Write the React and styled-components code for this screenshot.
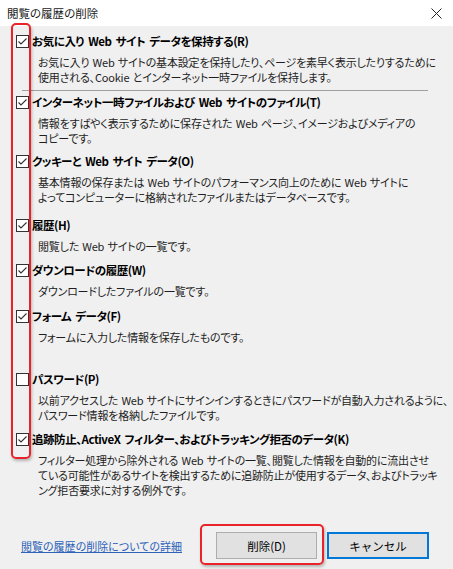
import React from "react";
import styled, { createGlobalStyle } from "styled-components";

const Global = createGlobalStyle`
  html, body { margin: 0; padding: 0; background: #f0f0f0; }
  body {
    font-family: "Noto Sans CJK JP", "Noto Sans", sans-serif;
    font-feature-settings: "palt";
    -webkit-font-smoothing: antialiased;
  }
`;

const Dialog = styled.div`
  width: 453px;
  height: 569px;
  position: relative;
  display: flex;
  flex-direction: column;
  background: #f0f0f0;
  overflow: hidden;
`;

const TitleBar = styled.div`
  height: 26px;
  flex: none;
  background: #ffffff;
  display: flex;
  align-items: center;
  justify-content: space-between;
  padding: 0 11px 0 7px;
  font-size: 11.5px;
  color: #1a1a1a;
`;

const Body = styled.div`
  display: flex;
  flex-direction: column;
  padding-left: 16px;
`;

const Item = styled.div`
  margin-top: ${(p) => p.$mt}px;
  display: flex;
  flex-direction: column;
`;

const Row = styled.label`
  display: flex;
  align-items: center;
  gap: 3px;
  height: 16px;
  font-size: 11.5px;
  letter-spacing: -0.45px;
  word-spacing: 2px;
  line-height: 16px;
  font-weight: 700;
  color: #000;
  white-space: pre;
`;

const Box = styled.span`
  width: 13px;
  height: 13px;
  box-sizing: border-box;
  border: 1px solid #333333;
  background: #ffffff;
  display: flex;
  align-items: center;
  justify-content: center;
  flex: none;
`;

const Desc = styled.div`
  margin-top: 6px;
  padding-left: 22px;
  font-size: 11px;
  letter-spacing: -0.2px;
  word-spacing: 1px;
  line-height: 15px;
  color: #1e1e1e;
  white-space: nowrap;
`;

const Separator = styled.div`
  margin: 5px 0 0 6px;
  width: 406px;
  height: 1px;
  background: #a0a0a0;
`;

const Footer = styled.div`
  margin-top: 34px;
  display: flex;
  align-items: center;
  padding: 0 24px 0 21px;
`;

const HelpLink = styled.a`
  font-size: 11px;
  color: #2e63b8;
  text-decoration: underline;
  white-space: nowrap;
  margin-right: auto;
  cursor: pointer;
`;

const Button = styled.button`
  width: ${(p) => p.$w}px;
  height: 27px;
  box-sizing: border-box;
  margin-left: ${(p) => p.$ml}px;
  background: #e1e1e1;
  border: ${(p) => (p.$default ? "2px solid #0078d7" : "1px solid #adadad")};
  font-family: inherit;
  font-size: 11.5px;
  color: #000;
  padding: 0;
`;

const Highlight = styled.div`
  position: absolute;
  left: ${(p) => p.$x}px;
  top: ${(p) => p.$y}px;
  width: ${(p) => p.$w}px;
  height: ${(p) => p.$h}px;
  box-sizing: border-box;
  border: 2px solid #e8232a;
  border-radius: 5px;
  box-shadow: 1px 2px 3px rgba(0, 0, 0, 0.25);
  pointer-events: none;
`;

const Check = () => (
  <svg width="11" height="11" viewBox="0 0 11 11">
    <polyline
      points="1.5,5.5 4,8 9.5,2.5"
      fill="none"
      stroke="#333"
      strokeWidth="1.1"
    />
  </svg>
);

const CloseIcon = () => (
  <svg width="11" height="11" viewBox="0 0 11 11">
    <path d="M0.5 0.5 L10.5 10.5 M10.5 0.5 L0.5 10.5" stroke="#222" strokeWidth="1" />
  </svg>
);

const items = [
  {
    mt: 7,
    title: "お気に入り Web サイト データを保持する(R)",
    checked: true,
    lines: [
      "お気に入り Web サイトの基本設定を保持したり、ページを素早く表示したりするために",
      "使用される、Cookie とインターネット一時ファイルを保持します。",
    ],
    sep: true,
  },
  {
    mt: 3,
    title: "インターネット一時ファイルおよび Web サイトのファイル(T)",
    checked: true,
    lines: [
      "情報をすばやく表示するために保存された Web ページ、イメージおよびメディアの",
      "コピーです。",
    ],
  },
  {
    mt: 7,
    title: "クッキーと Web サイト データ(O)",
    checked: true,
    lines: [
      "基本情報の保存または Web サイトのパフォーマンス向上のために Web サイトに",
      "よってコンピューターに格納されたファイルまたはデータベースです。",
    ],
  },
  { mt: 12, title: "履歴(H)", checked: true, lines: ["閲覧した Web サイトの一覧です。"] },
  { mt: 8, title: "ダウンロードの履歴(W)", checked: true, lines: ["ダウンロードしたファイルの一覧です。"] },
  { mt: 9, title: "フォーム データ(F)", checked: true, lines: ["フォームに入力した情報を保存したものです。"] },
  {
    mt: 26,
    title: "パスワード(P)",
    checked: false,
    lines: [
      "以前アクセスした Web サイトにサインインするときにパスワードが自動入力されるように、",
      "パスワード情報を格納したファイルです。",
    ],
  },
  {
    mt: 8,
    title: "追跡防止、ActiveX フィルター、およびトラッキング拒否のデータ(K)",
    checked: true,
    lines: [
      "フィルター処理から除外される Web サイトの一覧、閲覧した情報を自動的に流出させ",
      "ている可能性があるサイトを検出するために追跡防止が使用するデータ、およびトラッキ",
      "ング拒否要求に対する例外です。",
    ],
  },
];

export default function App() {
  return (
    <>
      <Global />
      <Dialog>
        <TitleBar>
          <span>閲覧の履歴の削除</span>
          <CloseIcon />
        </TitleBar>
        <Body>
          {items.map((it, i) => (
            <React.Fragment key={i}>
              <Item $mt={it.mt}>
                <Row>
                  <Box>{it.checked && <Check />}</Box>
                  {it.title}
                </Row>
                <Desc>
                  {it.lines.map((l, j) => (
                    <div key={j}>{l}</div>
                  ))}
                </Desc>
              </Item>
              {it.sep && <Separator />}
            </React.Fragment>
          ))}
        </Body>
        <Footer>
          <HelpLink>閲覧の履歴の削除についての詳細</HelpLink>
          <Button $w={101} $ml={0}>削除(D)</Button>
          <Button $w={102} $ml={10} $default>キャンセル</Button>
        </Footer>
        <Highlight $x={11} $y={23} $w={20} $h={436} />
        <Highlight $x={200} $y={524} $w={124} $h={41} />
      </Dialog>
    </>
  );
}
